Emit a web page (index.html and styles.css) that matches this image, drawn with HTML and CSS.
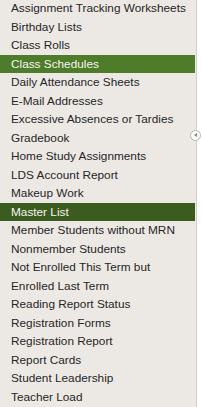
FILE: index.html
```html
<!DOCTYPE html>
<html lang="en">
<head>
    <meta charset="UTF-8">
    <title>Reports</title>
    <link rel="stylesheet" href="styles.css">
</head>
<body>
<div class="panel">
    <ul class="menu">
        <li>Assignment Tracking Worksheets</li>
        <li>Birthday Lists</li>
        <li>Class Rolls</li>
        <li class="select">Class Schedules</li>
        <li>Daily Attendance Sheets</li>
        <li>E-Mail Addresses</li>
        <li>Excessive Absences or Tardies</li>
        <li>Gradebook</li>
        <li>Home Study Assignments</li>
        <li>LDS Account Report</li>
        <li>Makeup Work</li>
        <li class="current">Master List</li>
        <li>Member Students without MRN</li>
        <li>Nonmember Students</li>
        <li>Not Enrolled This Term but<br>Enrolled Last Term</li>
        <li>Reading Report Status</li>
        <li>Registration Forms</li>
        <li>Registration Report</li>
        <li>Report Cards</li>
        <li>Student Leadership</li>
        <li>Teacher Load</li>
    </ul>
</div>
<div class="toggle"><span class="arrow"></span></div>
</body>
</html>
```

FILE: styles.css
```css
body,div,ul,li {
    margin: 0;
    padding: 0;
}
ul,li{
    list-style: none;
}

body {
    background: #ffffff;
    font-family: "Liberation Sans", Arial, sans-serif;
    font-size: 11.8px;
    color: #262626;
    overflow: hidden;
}

.panel {
    width: 196px;
    height: 407px;
    background: #ece9e5;
    border-right: 1px solid #d3cfca;
    overflow: hidden;
}

.menu {
    margin-top: -1px;
}

.menu li {
    line-height: 18.5px;
    padding-left: 11px;
    margin-right: 1px;
    white-space: nowrap;
}

.menu .select {
    background: #4f7c2b;
    color: #f4f6ee;
}

.menu .current {
    background: #3c5b1f;
    color: #f4f6ee;
}

.toggle {
    position: absolute;
    left: 190px;
    top: 130px;
    width: 9px;
    height: 9px;
    border: 1px solid #b9b6b2;
    border-radius: 50%;
    background: #fbfbfa;
}

.arrow {
    position: absolute;
    left: 3px;
    top: 2px;
    width: 0;
    height: 0;
    border-top: 2.5px solid transparent;
    border-bottom: 2.5px solid transparent;
    border-right: 3px solid #8a8884;
}
```
